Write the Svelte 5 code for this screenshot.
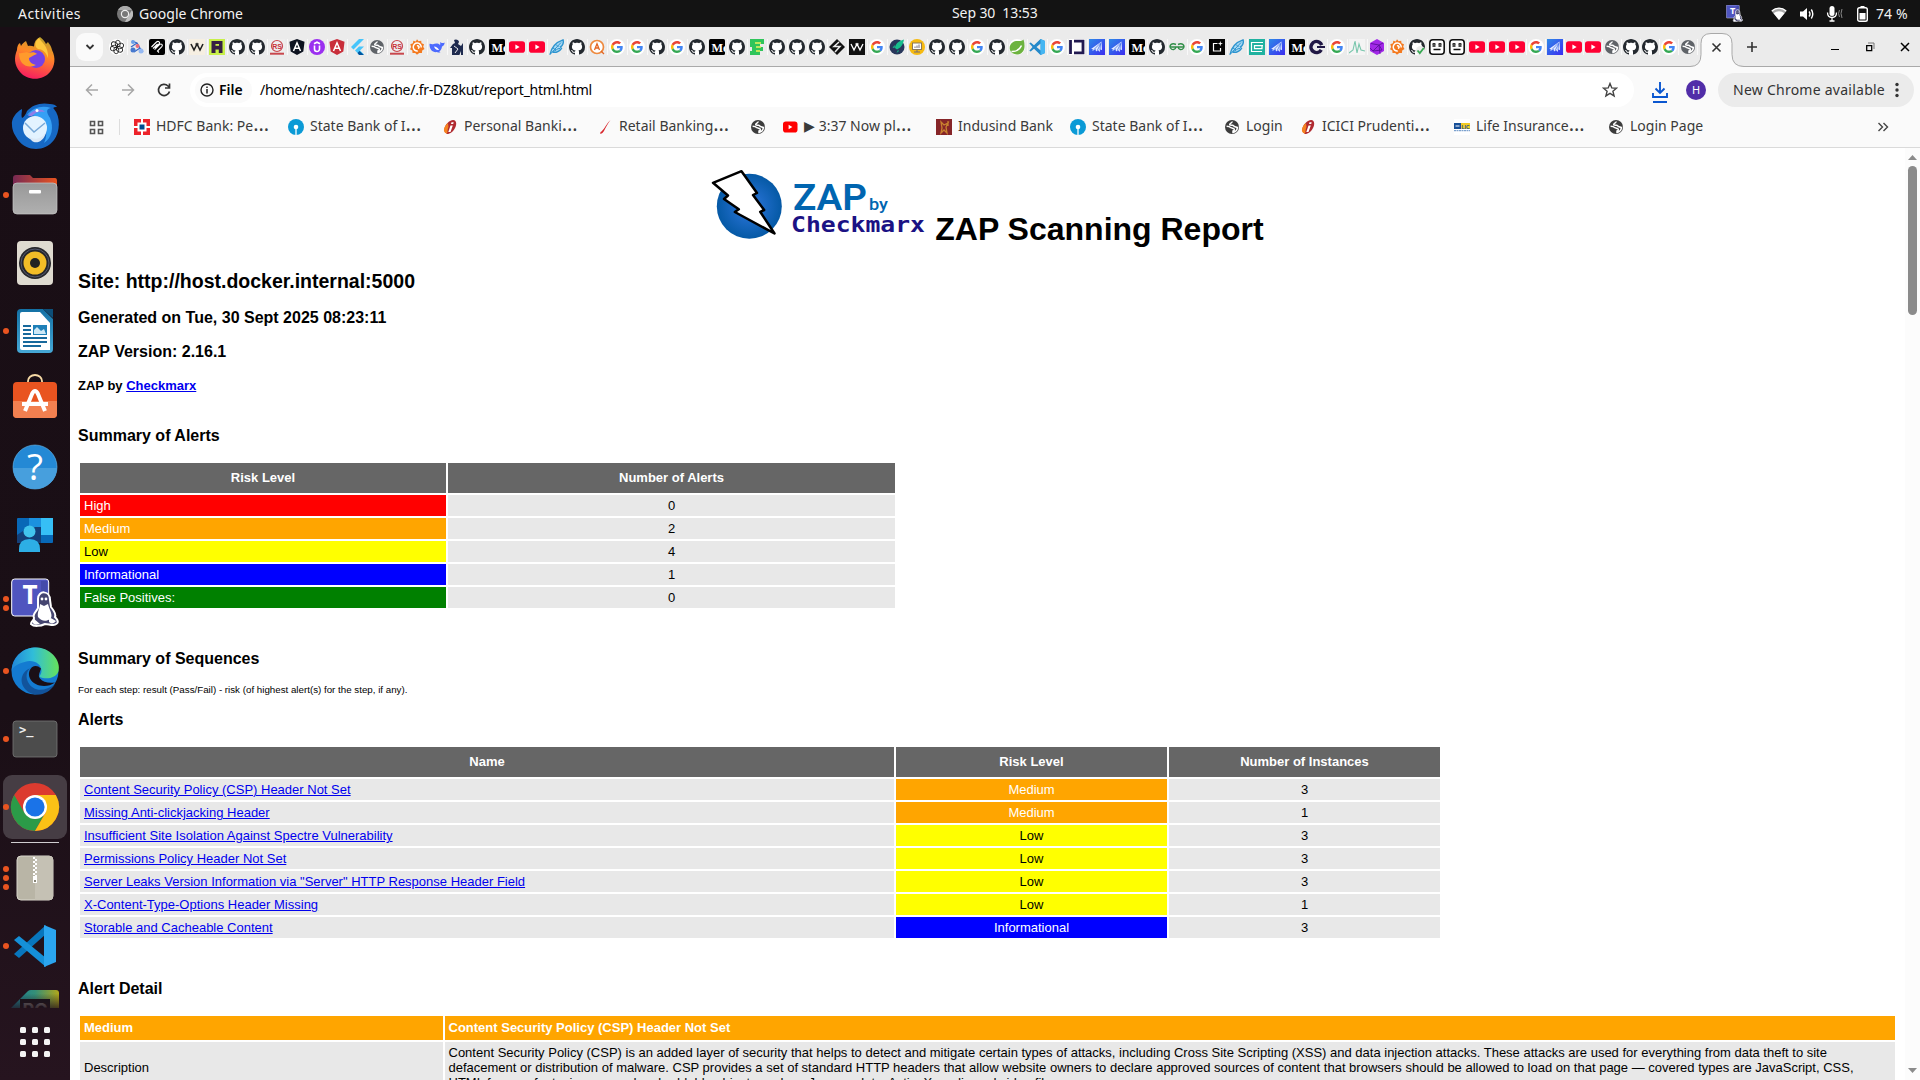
<script>
  const icons = {
    gh: '<circle cx="8" cy="8" r="8" fill="#fff"/><path fill="#24292f" d="M8 0C3.58 0 0 3.58 0 8c0 3.54 2.29 6.53 5.47 7.59.4.07.55-.17.55-.38 0-.19-.01-.82-.01-1.49-2.01.37-2.53-.49-2.69-.94-.09-.23-.48-.94-.82-1.13-.28-.15-.68-.52-.01-.53.63-.01 1.08.58 1.23.82.72 1.21 1.87.87 2.33.66.07-.52.28-.87.51-1.07-1.78-.2-3.64-.89-3.64-3.95 0-.87.31-1.59.82-2.15-.08-.2-.36-1.02.08-2.12 0 0 .67-.21 2.2.82.64-.18 1.32-.27 2-.27.68 0 1.36.09 2 .27 1.53-1.04 2.2-.82 2.2-.82.44 1.1.16 1.92.08 2.12.51.56.82 1.27.82 2.15 0 3.07-1.87 3.75-3.65 3.95.29.25.54.73.54 1.48 0 1.07-.01 1.93-.01 2.2 0 .21.15.46.55.38A8.013 8.013 0 0016 8c0-4.42-3.58-8-8-8z"/>',
    g: '<circle cx="8" cy="8" r="8" fill="#fff"/><g transform="translate(2 2) scale(.25)"><path fill="#EA4335" d="M24 9.5c3.54 0 6.71 1.22 9.21 3.6l6.85-6.85C35.9 2.38 30.47 0 24 0 14.62 0 6.51 5.38 2.56 13.22l7.98 6.19C12.43 13.72 17.74 9.5 24 9.5z"/><path fill="#4285F4" d="M46.98 24.55c0-1.57-.15-3.09-.38-4.55H24v9.02h12.94c-.58 2.96-2.26 5.48-4.78 7.18l7.73 6c4.51-4.18 7.09-10.36 7.09-17.65z"/><path fill="#FBBC05" d="M10.53 28.59c-.48-1.45-.76-2.99-.76-4.59s.27-3.14.76-4.59l-7.98-6.19C.92 16.46 0 20.12 0 24c0 3.88.92 7.54 2.56 10.78l7.97-6.19z"/><path fill="#34A853" d="M24 48c6.48 0 11.93-2.13 15.89-5.81l-7.73-6c-2.15 1.45-4.92 2.3-8.16 2.3-6.26 0-11.57-4.22-13.47-9.91l-7.98 6.19C6.51 42.62 14.62 48 24 48z"/></g>',
    yt: '<rect y="2.3" width="16" height="11.4" rx="2.8" fill="#ff0033"/><path fill="#fff" d="M6.4 5.6v4.8L10.6 8z"/>',
    ytb: '<rect x="1" y="2.5" width="14.5" height="11" rx="2.8" fill="#ff0000"/><path fill="#fff" d="M6.6 5.7v4.6L10.4 8z"/>',
    globe: '<circle cx="8" cy="8" r="7" fill="#5f6368"/><path d="M8.300 2.500c-.2 1.600-2.600 1.500-2.600 2.900 0 1 1.400.8 2.800.8 1.200 0 1.400 1.500 2.500 1.500.9 0 1.100.8 2.500.7-.3 2.500-2 4.500-4.500 5v-1.400c1.200-.3 1.800-1.300.9-2.200-.8-.8-2-.4-3-1.100C5.900 7.800 4.800 7.400 2.600 7.300" fill="none" stroke="#fff" stroke-width="1.5"/>',
    globed: '<circle cx="8" cy="8" r="7" fill="#3c3c3c"/><path d="M8.300 2.500c-.2 1.600-2.600 1.500-2.600 2.900 0 1 1.400.8 2.800.8 1.200 0 1.400 1.500 2.500 1.500.9 0 1.100.8 2.500.7-.3 2.500-2 4.500-4.500 5v-1.400c1.200-.3 1.800-1.300.9-2.200-.8-.8-2-.4-3-1.100C5.900 7.800 4.800 7.400 2.600 7.300" fill="none" stroke="#fff" stroke-width="1.5"/>',
    gpt: '<circle cx="8" cy="8" r="8" fill="#fff"/><g fill="none" stroke="#222" stroke-width=".9"><ellipse cx="8.800" cy="4.600" rx="2.500" ry="3.300"/><ellipse cx="8.800" cy="4.600" rx="2.500" ry="3.300" transform="rotate(60 8 8)"/><ellipse cx="8.800" cy="4.600" rx="2.500" ry="3.300" transform="rotate(120 8 8)"/><ellipse cx="8.800" cy="4.600" rx="2.500" ry="3.300" transform="rotate(180 8 8)"/><ellipse cx="8.800" cy="4.600" rx="2.500" ry="3.300" transform="rotate(240 8 8)"/><ellipse cx="8.800" cy="4.600" rx="2.500" ry="3.300" transform="rotate(300 8 8)"/></g>',
    jenk: '<path d="M3 2l5 2 3 5M2 8l6-4M5 13l6-4 3 4" fill="none" stroke="#3468c8" stroke-width="1.200"/><circle cx="4" cy="3" r="2" fill="#6ca0e8"/><circle cx="8.500" cy="7" r="2" fill="#e96c7a"/><circle cx="4" cy="11" r="2.500" fill="#4779cf"/><circle cx="12" cy="12" r="2.500" fill="#94b8f2"/>',
    mcp: '<rect width="16" height="16" rx="2" fill="#000"/><path d="M2.500 8l5-5c2-1.500 4 .5 2.500 2L6 9M5.500 10.500l5-5c2-1.500 3.700.7 2.300 2.200L8.500 12l1.500 1.500M4 9.500L8.500 5" fill="none" stroke="#fff" stroke-width="1.100"/>',
    wl: '<rect width="16" height="16" fill="#f6efe2"/><path d="M2 5l3 6 3-6 3 6 3-6M6.500 5h3" fill="none" stroke="#222" stroke-width="1.600"/>',
    wd: '<rect width="16" height="16" fill="#111"/><path d="M2 5l3 6 3-6 3 6 3-6M6.500 5h3" fill="none" stroke="#fff" stroke-width="1.300"/>',
    fh: '<rect width="16" height="16" fill="#c8f04a"/><path fill="#352044" d="M2.500 2h11v12H9.800v-3.500H6.500V14h-4z"/><path fill="#c8f04a" d="M6.500 5h3.500v1.800H6.500z"/>',
    rs: '<rect width="16" height="16" fill="#eee"/><circle cx="8" cy="7" r="5.500" fill="none" stroke="#c8474d" stroke-width="1.200"/><text x="8" y="9.700" text-anchor="middle" font-size="7" font-weight="700" fill="#c83038" font-family="Liberation Sans, sans-serif">RS</text><path d="M1 14.700h14" stroke="#c8474d" stroke-width="2"/>',
    angk: '<path fill="#0d1320" d="M8 0l7.500 2.700-1.200 9.800L8 16l-6.300-3.500L.5 2.700z"/><path d="M4.500 12L8 3.800l3.500 8.200M6 9.300h4" fill="none" stroke="#fff" stroke-width="1.500"/>',
    angr: '<path fill="#c92e3a" d="M8 0l7.500 2.700-1.200 9.800L8 16l-6.300-3.500L.5 2.700z"/><path d="M4.500 12L8 3.800l3.500 8.200M6 9.300h4" fill="none" stroke="#fff" stroke-width="1.500"/>',
    ude: '<circle cx="8" cy="8" r="8" fill="#9b2ff0"/><path d="M5.500 6.500V10a2.500 2.500 0 005 0V6.500M5 4.800l3-1.600 3 1.600" fill="none" stroke="#fff" stroke-width="1.600"/>',
    flut: '<path fill="#47c5fb" d="M10 0L2 8l2.500 2.500L15 0zM10 7.500L6 11.500l4 4h5L11 11.500l4-4z"/><path fill="#00569e" d="M8.500 14l2-2 4.500 4h-5z"/>',
    graf: '<path fill="#f47a20" d="M8 .3l1.600 2 2.600-.6.300 2.600 2.500 1-.8 2.500 1.300 2.300-2.300 1.300-.3 2.600-2.700-.1L8 15.800l-1.800-1.900-2.700.2-.2-2.600L1 10.200l1.200-2.300L1.300 5.300l2.600-1L4.300 1.700l2.500.7z"/><path d="M12.200 8.500A4 4 0 108.800 12M8 7c2-.8 3 2 .9 2.300" fill="none" stroke="#fff" stroke-width="1.500"/>',
    whale: '<path fill="#4d6bfe" d="M.5 5c1-.6 2 .8 3.500.2C6 4.300 9 3.700 11 6c.7-1-.3-2.300.6-3 .5 1.400 2.500 1.200 4 .4 0 2-1 3.500-2.600 4-.3 2.500-1.300 4-2.800 5l1.300.8c-2 .8-3.300.2-4-.1C3.500 13.500.3 10.500.5 5z"/><path fill="#fff" d="M5 7.500c2 0 4 1.500 5 3.500-2.500.5-4-1-5-3.500z"/>',
    knight: '<path fill="#1e2a4e" d="M5 1c2-1.500 5 0 5 2l-1 2 3 2 2-3v12h-2v-4l-2 5H6l-3-1V9H1l3-4 2-1z"/><path d="M5 7l4 3-3 4" stroke="#fff" stroke-width=".9" fill="none"/>',
    med: '<rect width="16" height="16" rx="1.500" fill="#000"/><text x="2.500" y="13" font-size="13" font-weight="700" fill="#fff" font-family="Liberation Serif, serif" textLength="17" lengthAdjust="spacingAndGlyphs">Me</text>',
    fea: '<path d="M1 15.500C2 9 7 3 14 .8c1 3-.4 6-2.500 7l1 1.500c-2 3-5 4.500-9 4" fill="#a9d9f3" stroke="#2d94cf" stroke-width="1.400"/><path d="M1 15.500L12 3.500M4 9l3 2M7 5.500L9.500 8M11 9.500c-3-.5-4 2.500-7 3" stroke="#2d94cf" fill="none"/>',
    ao: '<circle cx="8" cy="8" r="6.500" fill="#fff" stroke="#ee8a3f" stroke-width="1.700"/><path d="M5.500 11L8 4.800l2.500 6.200M6.500 9h3M12 12l3 3" fill="none" stroke="#e26524" stroke-width="1.300"/>',
    green: '<path fill="#30c55b" d="M1 0h14v5h-4v3h3v4h-3v4H1v-4h2V8H1z"/><path d="M6 4h6M7 8h5M7 12h4" stroke="#eaf45b" stroke-width="1.500"/>',
    hash: '<path d="M8 0l8 8-8 8-8-8z" fill="#111"/><path d="M10 3L5 7.500h6L6 13" fill="none" stroke="#ebebeb" stroke-width="1.500"/>',
    rocket: '<circle cx="8" cy="8" r="7.500" fill="#28375b"/><path fill="#17be8c" d="M15 .5C9 2 6 5.500 6 9l2 1.500C11.500 9 14 6 15 .5zM6 6L3.500 8.500 5.500 9zM9 11l-1.500 3L10 12z"/>',
    yel: '<circle cx="8" cy="8" r="8" fill="#f6ba11"/><rect x="3.500" y="4" width="9" height="6.500" fill="#fff" stroke="#8b785a"/><path d="M6 9V7.500M8 9V6.500M10 9V5.500M8 11v2M5 13h6" stroke="#756c7b"/>',
    leaf: '<rect width="16" height="16" rx="8" fill="#fff"/><path fill="#6db33f" d="M14.500.500c1.600 5.600 1.700 10.800-2 13.400C8.500 16.700 2.500 15.500 1 11-.4 6.500 3 2.500 7 2c3-.3 6 .5 7.500-1.500z"/><path d="M2.500 12.500c5 .3 8-1.700 10-6" fill="none" stroke="#fff" stroke-width="1.500"/>',
    vs: '<path fill="#2489ca" d="M11.500 0L16 2v12l-4.500 2L5 9.800 1.700 12.500.300 11.700 3.500 8 .300 4.300l1.400-.8L5 6.200zM11.700 4.600L7.500 8l4.200 3.400z"/><path fill="#45b6f2" d="M11.500 0L16 2v12l-4.500 2z"/>',
    id: '<rect width="16" height="16" fill="#fff"/><path d="M1.500 1v14M5 2.200h9v11.600H5" fill="none" stroke="#211950" stroke-width="2.800"/>',
    sq: '<rect width="16" height="16" fill="url(#bluebox)"/><path fill="#e4ecff" d="M12.500 2.500L13 11l-2-.5-.3 2.500-1.700-2L7 12.500 6.500 10l-3 2 .2-2L2 10z"/><path d="M12 3.500L5 10.500M12 4L8.500 11M11.500 5l-.5 6" stroke="#3566e8" stroke-width=".7"/>',
    gfg: '<path d="M7 5.500C3 3.500 0 6 1.500 9c1.500 2.500 5 2 5.500-1H1M9 5.500c4-2 7 .5 5.500 3.500-1.500 2.500-5 2-5.500-1h6M6.500 8h3" fill="none" stroke="#2f8d46" stroke-width="1.400"/>',
    box: '<rect width="16" height="16" fill="#050505"/><path d="M8.500 4.500H4.500v7.500h7V9" fill="none" stroke="#fff" stroke-width="1.200"/><path fill="#fff" d="M11.300 2l.6 2 2 .6-2 .6-.6 2-.6-2-2-.6 2-.6z"/>',
    teal: '<rect width="16" height="16" fill="#20b2a0"/><path d="M14 3.500H2.500v9H13M13 6.500v3.200H5.500V6.700H14" fill="none" stroke="#fff" stroke-width="1.200"/>',
    con: '<circle cx="7.500" cy="8" r="5.500" fill="none" stroke="#201744" stroke-width="3.500" stroke-dasharray="29 6" transform="rotate(30 7.500 8)"/><path d="M8 8h8" stroke="#201744" stroke-width="2"/>',
    pulse: '<rect width="16" height="16" fill="#f4f4f4"/><path d="M0 14l4-3 2-9 2 12 2-9 2 6 4 1" fill="none" stroke="#78c6ac" stroke-width="1.100"/>',
    gem: '<path fill="#a229e8" d="M8 0l7 4v8l-7 4-7-4V4z"/><path d="M2 4.500l8 1.500 4-2M10 6L4 12l9-1zM1 9l3 3M10 6l1 9" stroke="#5b109c" fill="none" stroke-width=".9"/>',
    bot: '<rect x=".8" y=".8" width="14.400" height="14.400" rx="3" fill="#fff" stroke="#111" stroke-width="1.600"/><path d="M3.500 5.500c1-1 2-1 3 0M9.500 5.500c1-1 2-1 3 0M3.500 7h3M9.500 7h3M4.500 10.500h7" fill="none" stroke="#111" stroke-width="1.300"/>',
    hdfc: '<rect width="16" height="16" fill="#ed232a"/><path d="M8 0v16M0 8h16" stroke="#fff" stroke-width="2"/><path fill="#fff" d="M3.500 3.500h9v9h-9z"/><path fill="#004c8f" d="M5.500 5.500h5v5h-5z"/>',
    sbi: '<circle cx="8" cy="8" r="8" fill="#0b9ad6"/><circle cx="8" cy="8" r="2.300" fill="#fff"/><path d="M8 8v8" stroke="#fff" stroke-width="1.300"/>',
    icici: '<path fill="#b02a30" d="M8 2c5-3 7.500 1 5.500 6-1.800 4.500-5.500 7-8.500 7C0 12 3 5 8 2z"/><path fill="#f58220" d="M6 4C2 7 0 13 4.500 14.500 6 15 5 11 6.500 8z"/><path fill="#fff" d="M8.500 6.500h2.300L8.500 13H6.300zM9.500 3.300h2.200l-.5 1.800H9z"/>',
    slash: '<path fill="#d8262c" d="M13.500 1C11 4 9 8 7 12c-1 1.500-2 2.500-3.500 3-.6-1 0-2.300 1-2.500C8 9 10 4 13.500 1z"/>',
    ind: '<rect width="16" height="16" fill="#862528"/><path d="M5 3l3 3 4-2-2 4 1 6-3-3-3 3 1-5zM12 2v5" fill="none" stroke="#c9822f" stroke-width="1.300"/>',
    lic: '<rect width="16" height="16" fill="#fff"/><rect y="4" width="7" height="6" fill="#174f98"/><rect x="7" y="4" width="9" height="6" fill="#f3cb22"/><text x="7.500" y="9.500" font-size="6" font-weight="700" fill="#174f98" font-family="Liberation Sans, sans-serif" textLength="8" lengthAdjust="spacingAndGlyphs">LIC</text><path d="M1.500 7h4" stroke="#fff"/><path d="M0 11.700h16" stroke="#5f8dc3" stroke-dasharray="2 .5"/>'
  };
  icons.ghc = icons.gh + '<circle cx="11.500" cy="11.500" r="4.500" fill="#ebebeb"/><path d="M8.500 11.500l2.300 2.500 4-5" fill="none" stroke="#36a852" stroke-width="1.800"/>';

  const tabs = ('gpt jenk mcp gh wl fh gh gh rs angk ude angr flut globe rs graf whale knight gh med yt yt fea gh ao ' +
    'g g gh g gh med gh green gh gh gh hash wd g rocket yel gh gh g gh leaf vs g id sq sq med gh gfg g box fea ' +
    'teal sq med con g pulse gem graf ghc bot bot yt yt yt g sq yt yt globe gh gh g globe').split(' ');

  const bookmarks = [
    ['hdfc', 'HDFC Bank: Pe', true], ['sbi', 'State Bank of I', true], ['icici', 'Personal Banki', true], ['slash', 'Retail Banking', true],
    ['globed', ''], ['ytb', '▶ 3:37 Now pl', true], ['ind', 'Indusind Bank'], ['sbi', 'State Bank of I', true],
    ['globed', 'Login'], ['icici', 'ICICI Prudenti', true], ['lic', 'Life Insurance', true], ['globed', 'Login Page']
  ];

  const dock = [
    { name: 'firefox', dots: 0, art: '<path fill="url(#fox)" d="M6 15c0-3 1-6 3-7l1 3c1-2 3-4 5-5l2 5c2-.3 4-.2 6 .5C23 7 25 4 29 2c3 2 5 5 6 7l2-2c1 2 3 3 4 8 4 8 3 16-2 22-7 9-23 9-30 0C3 30 3 22 6 15z"/><circle cx="25" cy="24" r="9" fill="#7542e5"/><path fill="#ff9a2c" d="M8 18c3 1 7-2 10 0 3-1 6-1 8 1-4 1-5 3-8 4 0 4 3 6 7 7-8 4-17 0-17-12z"/><path fill="#ffc83d" d="M28 3c2 4 10 8 9 20-2-6-6-9-10-9-5-3-2-9 1-11z"/>' },
    { name: 'thunderbird', dots: 0, art: '<path fill="#1668c4" d="M1 22C0 16 5 9 11 6c0 4-1 5 0 9 2-1 4-4 5-7C21 2 30-1 39 1c3 0 6 1 7 3-4 0-4 1-3 2 7 8 6 23 0 31-9 12-27 12-36 0-4-6-6-10-6-15z"/><path fill="#36a0f5" d="M16 12C22 4 32 2 40 5c-6 1-4 5-1 10 4 9 2 20-6 25 4-8 3-18-4-24-4-3-9-5-13-4z"/><circle cx="24" cy="25" r="12" fill="#e3f3ff"/><path d="M14 20l9 9 11-9" fill="none" stroke="#78a9d8" stroke-width="1.500"/><path fill="#8f7de8" d="M17 13C21 7 30 4 34 9c-5-1-10 0-13 4z"/><path fill="#dce9f6" d="M17 33c6 5 14 3 18-4-2 10-10 12-14 9z"/><circle cx="26" cy="7.500" r="1.500" fill="#fff"/>' },
    { name: 'files', dots: 1, art: '<path fill="url(#folder)" d="M2 7q0-3 3-3h14l3 3h22q2 0 2 3v20H2z"/><rect x="2" y="12" width="44" height="31" rx="4" fill="url(#gray)" stroke="#c7c7c7" stroke-width=".7"/><rect x="18" y="19" width="12" height="3.500" rx="1" fill="#fff"/>' },
    { name: 'music', dots: 0, art: '<rect x="6" y="2" width="36" height="44" rx="4" fill="#dfdbd0"/><circle cx="24" cy="24" r="16" fill="#27272b"/><circle cx="24" cy="24" r="14" fill="none" stroke="#555a70"/><circle cx="24" cy="24" r="11.500" fill="#f3bd27"/><circle cx="24" cy="24" r="5" fill="#222"/>' },
    { name: 'writer', dots: 1, art: '<path fill="url(#write)" d="M10 2h22l10 10v30q0 4-4 4H10q-4 0-4-4V6q0-4 4-4z"/><path fill="#fff" d="M11 5h18l10 11v27H11q-2 0-2-2V7q0-2 2-2z"/><path fill="#0d4f79" d="M32 2h10v9z"/><path d="M12 19h8M12 23h8M12 27h8M12 31h24M12 35h24M12 39h18" stroke="#18699c" stroke-width="1.800"/><rect x="22" y="18" width="14" height="10" fill="#1e80b8"/><path fill="#cde8f6" d="M23 27v-4l3-3 4 4 3-2 2 5z"/>' },
    { name: 'software', dots: 0, art: '<path d="M17 9V6a7 6 0 0114 0v3" fill="none" stroke="#f6d9a5" stroke-width="1.800"/><rect x="2" y="7" width="44" height="36" rx="4" fill="#e95420"/><path fill="#f28050" d="M2 26h44v13q0 4-4 4H6q-4 0-4-4z"/><path d="M14 36l7-17q3-6 6 0l7 17M11 29h26" fill="none" stroke="#fff" stroke-width="4"/>' },
    { name: 'help', dots: 0, art: '<circle cx="24" cy="24" r="22" fill="#2489d5" stroke="#6abcf0" stroke-width=".6"/><path fill="#479fdd" d="M2 25h44a22 21 0 01-44 0z"/><text x="24" y="37" text-anchor="middle" font-size="37" fill="#fff" font-family="Open Sans, sans-serif">?</text>' },
    { name: 'contacts', dots: 0, art: '<rect x="6" y="7" width="36" height="25" rx="1" fill="#0868b7"/><path fill="#1b91df" d="M18 7h12v25H18z"/><path fill="#36bff6" d="M30 7h12v17H30z"/><path fill="#133f78" d="M18 16h12v16H6v-8z"/><circle cx="18.500" cy="20.500" r="6" fill="#42c5ed"/><path fill="#2daee5" d="M8 41v-3q0-10 10.500-10T29 38v3z"/>' },
    { name: 'teams', dots: 2, art: '<rect x=".7" y="0" width="37" height="37" rx="3" fill="#4f55bf" stroke="#fff"/><path fill="#444baa" d="M30 2h6v32h-6z"/><text x="19" y="25" text-anchor="middle" font-size="26" font-weight="700" fill="#fff" font-family="Noto Sans, sans-serif">T</text><path fill="#454570" stroke="#fff" stroke-width="2" d="M27 20c0-9 12-9 12 1l1 7c4 5 5 8 4 10 4 4 4 7-2 8-3 0-5-1-8-1-4 2-11 3-14 0 0-3 3-3 3-6-2-4 3-7 4-10z"/><path fill="#fff" d="M29 25l4 2 4-2c1 5 6 12 2 15-4 3-9 2-12-2-1-5 2-9 2-13zM22 39l7 6c-4 1-6 1-7-1zM38 38l7 4c-2 3-5 3-7 1z"/><circle cx="31" cy="20" r="1.400" fill="#fff"/><circle cx="35" cy="20" r="1.400" fill="#fff"/>' },
    { name: 'edge', dots: 1, art: '<circle cx="24" cy="24" r="23.500" fill="#147bd1"/><path fill="url(#edgeg)" d="M.5 24C2 8 14 0 26 .500c16 1 24 15 21.500 23.500-2 7-12 9-19 6 0-2 2-3 2-6 0-8-9-12-17-9-7 2-11 4-13 9z"/><path fill="#12539b" d="M26 20c-8-2-13 7-9 15 5 10 17 10 27 2-7 12-22 14-30 5-8-10-1-22 12-22z"/><path fill="#1a0f16" d="M30 21.500c-7-7-15 2-11 10 4 8 17 10 25 4-6 1-12 0-15-4-2-3-1-4 1-10z"/>' },
    { name: 'terminal', dots: 1, art: '<rect x="2" y="6" width="44" height="36" rx="3" fill="#4c4c4c" stroke="#777" stroke-width=".8"/><text x="8" y="19" font-size="12" font-weight="700" fill="#eee" font-family="DejaVu Sans Mono, monospace">&gt;_</text>' },
    { name: 'chrome', dots: 1, active: true, art: '<circle cx="24" cy="24" r="24" fill="#dc3b2f"/><path fill="#2b9b48" d="M3.200 12A24 24 0 0024 48l9-16-9 4-11-7z"/><path fill="#fbc116" d="M24 48A24 24 0 0044.800 12H24l10 7 1 10z"/><circle cx="24" cy="24" r="12" fill="#fff"/><circle cx="24" cy="24" r="9.600" fill="#1a73e8"/>' }
  ];
  const dockTail = [
    { name: 'archive', dots: 3, art: '<rect x="6" y="2" width="36" height="44" rx="4" fill="#b9b5a6" stroke="#d9d6cc"/><path fill="#c5c1b4" d="M24 2h14q4 0 4 4v36q0 4-4 4H24z"/><path d="M23 3v20" stroke="#fff" stroke-width="2" stroke-dasharray="2 2"/><path d="M25 5v18" stroke="#fff" stroke-width="2" stroke-dasharray="2 2"/><path fill="#fff" d="M22 22h4v7h-4z"/><path fill="#8a8779" d="M23 26h2v2h-2z"/>' },
    { name: 'vscode', dots: 1, art: '<path fill="#0876bd" d="M3 32l5 4 27-24V3L3 32z"/><path fill="#1590d8" d="M3 18l5-4 27 22v9L3 18z"/><path fill="#2ba5ef" d="M33 3l12 5v32l-12 5z"/>' }
  ];

  const summary = [
    ['High', 0, 'high'], ['Medium', 2, 'medium'], ['Low', 4, 'low'], ['Informational', 1, 'info'], ['False Positives:', 0, 'fp']
  ];
  const alerts = [
    ['Content Security Policy (CSP) Header Not Set', 'Medium', 3, 'medium'],
    ['Missing Anti-clickjacking Header', 'Medium', 1, 'medium'],
    ['Insufficient Site Isolation Against Spectre Vulnerability', 'Low', 3, 'low'],
    ['Permissions Policy Header Not Set', 'Low', 3, 'low'],
    ['Server Leaks Version Information via "Server" HTTP Response Header Field', 'Low', 3, 'low'],
    ['X-Content-Type-Options Header Missing', 'Low', 1, 'low'],
    ['Storable and Cacheable Content', 'Informational', 3, 'info']
  ];
</script>

{#snippet launcher(app)}
  <div class="launcher" class:active={app.active}>
    <span class="dots">{#each Array(app.dots) as _}<i></i>{/each}</span>
    <svg width="48" height="48" viewBox="0 0 48 48">{@html app.art}</svg>
  </div>
{/snippet}

<svg class="defs" width="0" height="0">
  <defs>
    <linearGradient id="bluebox" x2="1" y2="1"><stop stop-color="#2e8be8" /><stop offset="1" stop-color="#3c2cf0" /></linearGradient>
    <linearGradient id="fox" x1=".7" x2=".4" y2="1"><stop stop-color="#b8a32c" /><stop offset=".4" stop-color="#ff8a26" /><stop offset="1" stop-color="#f81d60" /></linearGradient>
    <linearGradient id="folder" x2="1"><stop stop-color="#772953" /><stop offset="1" stop-color="#e95420" /></linearGradient>
    <linearGradient id="gray" x2="0" y2="1"><stop stop-color="#989898" /><stop offset="1" stop-color="#b0b0b0" /></linearGradient>
    <linearGradient id="write" x2="0" y2="1"><stop stop-color="#1370a4" /><stop offset="1" stop-color="#46a8d6" /></linearGradient>
    <linearGradient id="edgeg"><stop stop-color="#2186d8" /><stop offset=".45" stop-color="#30bdd9" /><stop offset="1" stop-color="#66e35a" /></linearGradient>
    <linearGradient id="pc"><stop stop-color="#167b98" /><stop offset=".5" stop-color="#348f78" /><stop offset="1" stop-color="#b1a71a" /></linearGradient>
    <linearGradient id="fade" x2="0" y2="1"><stop offset=".2" stop-color="#24131c" stop-opacity="0" /><stop offset="1" stop-color="#24131c" stop-opacity=".75" /></linearGradient>
    <radialGradient id="orb"><stop stop-color="#2f78e0" /><stop offset="1" stop-color="#0559a5" /></radialGradient>
  </defs>
</svg>

<div class="desktop">
  <header class="topbar">
    <span class="activities">Activities</span>
    <svg class="app-icon" width="16" height="16" viewBox="0 0 16 16"><circle cx="8" cy="8" r="8" fill="#777" /><path d="M1 4a8 8 0 0114 0z" fill="#aaa" /><path d="M8 16A8 8 0 0015 4l-5 8z" fill="#bcbcbc" /><circle cx="8" cy="8" r="4.200" fill="#eee" /><circle cx="8" cy="8" r="3" fill="#777" /></svg>
    <span class="app-name">Google Chrome</span>
    <span class="clock">Sep 30&nbsp; 13:53</span>
    <div class="tray">
      <svg width="17" height="17" viewBox="0 0 48 48">{@html dock[8].art}</svg>
      <svg class="wifi" width="16" height="16" viewBox="0 0 16 16"><path fill="#aaa" d="M8 14L.500 5C5 1 11 1 15.500 5z" /><path fill="#fff" d="M8 14L2.500 7.200C6 4.500 10 4.500 13.500 7.200z" /><path d="M.800 5C5 1.200 11 1.200 15.200 5" fill="none" stroke="#fff" stroke-width="1.300" /></svg>
      <svg class="vol" width="16" height="16" viewBox="0 0 16 16"><path fill="#fff" d="M1 5.500h3L8 2v12l-4-3.500H1z" /><path d="M10 5.500q2 2.500 0 5M12.300 3.500q3 4.500 0 9" fill="none" stroke="#fff" stroke-width="1.400" /></svg>
      <svg class="mic" width="17" height="17" viewBox="0 0 17 17"><rect x="3.500" y="1" width="5" height="10" rx="2.500" fill="#fff" /><path d="M1.500 7.500q0 5 4.500 5t4.500-5M6 12.500V16M3.500 16h5" fill="none" stroke="#fff" stroke-width="1.300" /><path d="M13.500 5q-2 3.500 0 7M16 4q-2 4.500 0 9" fill="none" stroke="#888" /></svg>
      <svg class="bat" width="11" height="16" viewBox="0 0 11 16"><path fill="#fff" d="M3.500 0h4v2h-4zM2.500 7h6v6.500h-6z" /><rect x=".7" y="1.700" width="9.600" height="13.600" rx="1.800" fill="none" stroke="#fff" stroke-width="1.400" /></svg>
      <span class="pct">74 %</span>
    </div>
  </header>

  <div class="main">
    <nav class="dock">
      {#each dock as app (app.name)}{@render launcher(app)}{/each}
      <div class="divider"></div>
      {#each dockTail as app (app.name)}{@render launcher(app)}{/each}
      <svg class="pycharm" width="48" height="18" viewBox="0 0 48 18"><path fill="url(#pc)" d="M0 18L17 1q1-1 3-1h25q3 0 3 3v15z" /><path fill="#17131a" d="M9 9h30v9H9z" /><text x="11.500" y="26" font-size="18" font-weight="700" fill="#777" font-family="Inter, sans-serif">PC</text><path fill="url(#fade)" d="M0 0h48v18H0z" /></svg>
      <div class="grid">{#each Array(9) as _}<i></i>{/each}</div>
    </nav>

    <div class="browser">
      <div class="tabstrip">
        <button class="search" aria-label="Search tabs"><svg width="10" height="10" viewBox="0 0 10 10"><path d="M1.500 3L5 6.500 8.500 3" fill="none" stroke="#333" stroke-width="1.800" /></svg></button>
        <div class="tabs">
          {#each tabs as tab, i}
            <div class="tab" class:narrow={i >= 70}><svg width="16" height="16" viewBox="0 0 16 16">{@html icons[tab]}</svg></div>
          {/each}
        </div>
        <svg class="active-tab" width="54" height="34" viewBox="0 0 54 34"><path fill="#fafafa" stroke="#a9a9a9" d="M0 33.500q11 0 11-12V10.500Q11 .5 21 .5H32Q42 .5 42 10.500v11q0 12 12 12V36H0z" /><path d="M22.500 10.500l8 8m0-8l-8 8" stroke="#333" stroke-width="1.600" /></svg>
        <svg class="plus" width="12" height="12" viewBox="0 0 12 12"><path d="M6 1v10M1 6h10" stroke="#333" stroke-width="1.600" /></svg>
        <div class="win">
          <svg width="12" height="12" viewBox="0 0 12 12"><path d="M2 8.500h8" stroke="#000" /></svg>
          <svg width="12" height="12" viewBox="0 0 12 12"><path d="M4 2h6v6" fill="none" stroke="#777" /><path d="M2.700 4.700h5v5h-5z" fill="none" stroke="#000" stroke-width="1.300" /></svg>
          <svg width="12" height="12" viewBox="0 0 12 12"><path d="M2 2l8 8m0-8l-8 8" stroke="#000" stroke-width="1.500" /></svg>
        </div>
      </div>

      <div class="toolbar">
        <svg width="16" height="16" viewBox="0 0 16 16"><path d="M14 8H3M8 2.500L2.500 8 8 13.500" fill="none" stroke="#a6a6a6" stroke-width="1.500" /></svg>
        <svg width="16" height="16" viewBox="0 0 16 16"><path d="M2 8h11M8 2.500L13.500 8 8 13.500" fill="none" stroke="#a6a6a6" stroke-width="1.500" /></svg>
        <svg width="16" height="16" viewBox="0 0 16 16"><path d="M13.500 9.500A5.600 5.600 0 1112 4l1.500 1.500M13.500 1.500v4.500H9" fill="none" stroke="#333" stroke-width="1.700" /></svg>
        <div class="omnibox">
          <div class="chip">
            <svg width="14" height="14" viewBox="0 0 14 14"><circle cx="7" cy="7" r="6" fill="none" stroke="#222" stroke-width="1.400" /><path d="M7 6v4.500M7 3.500v1.400" stroke="#222" stroke-width="1.500" /></svg>
            <span>File</span>
          </div>
          <span class="url">/home/nashtech/.cache/.fr-DZ8kut/report_html.html</span>
          <svg class="star" width="16" height="16" viewBox="0 0 16 16"><path d="M8 1.500l1.800 4.400 4.700.3-3.600 3 1.200 4.700L8 11.300l-4.100 2.600 1.200-4.700-3.600-3 4.700-.3z" fill="none" stroke="#444" stroke-width="1.400" /></svg>
        </div>
        <svg class="download" width="16" height="22" viewBox="0 0 16 22"><path d="M8 0v10M3.500 6.500L8 11l4.500-4.500M1 11v4h14v-4M1 20h14" fill="none" stroke="#0b57d0" stroke-width="1.900" /></svg>
        <span class="avatar">H</span>
        <div class="update"><span>New Chrome available</span><svg width="4" height="16" viewBox="0 0 4 16"><g fill="#333"><circle cx="2" cy="2.500" r="1.700" /><circle cx="2" cy="8" r="1.700" /><circle cx="2" cy="13.500" r="1.700" /></g></svg></div>
      </div>

      <div class="bookmarks">
        <svg width="15" height="15" viewBox="0 0 15 15"><path d="M1.500 1.500h4v4h-4zM9.500 1.500h4v4h-4zM1.500 9.500h4v4h-4zM9.500 9.500h4v4h-4z" fill="none" stroke="#555" stroke-width="1.600" /></svg>
        <span class="sep"></span>
        {#each bookmarks as [icon, label, cut]}
          <div class="bookmark"><svg width="16" height="16" viewBox="0 0 16 16">{@html icons[icon]}</svg><span class="label">{label}{#if cut}<span class="more">…</span>{/if}</span></div>
        {/each}
        <svg width="12" height="12" viewBox="0 0 12 12"><path d="M1.500 2l4 4-4 4M6.500 2l4 4-4 4" fill="none" stroke="#444" stroke-width="1.400" /></svg>
      </div>

      <div class="viewport">
        <main class="report">
          <h1>
            <svg width="215" height="72" viewBox="0 0 215 72">
              <circle cx="38.300" cy="38.300" r="32.500" fill="url(#orb)" />
              <path fill="#fff" stroke="#000" stroke-width="2.500" stroke-linejoin="round" d="M2 14.800L30.500 3.200 46 25l-4 2L53.200 42l-4 1.800L63.500 65.500 23.800 44l4-2.700L13 31l4-3.500z" />
              <text x="82" y="42" font-size="37" font-weight="600" fill="#0065b0" font-family="Roboto, sans-serif" textLength="74" lengthAdjust="spacingAndGlyphs">ZAP</text>
              <text x="158" y="42" font-size="17" font-weight="500" fill="#0065b0" font-family="Roboto, sans-serif" textLength="19" lengthAdjust="spacingAndGlyphs">by</text>
              <text x="80" y="63.500" font-size="22" font-weight="700" fill="#1b1284" font-family="DejaVu Sans Mono, monospace" textLength="134" lengthAdjust="spacingAndGlyphs">Checkmarx</text>
            </svg>
            ZAP Scanning Report
          </h1>
          <h2>Site: http://host.docker.internal:5000</h2>
          <h3>Generated on Tue, 30 Sept 2025 08:23:11</h3>
          <h3>ZAP Version: 2.16.1</h3>
          <h4>ZAP by <a href="#checkmarx">Checkmarx</a></h4>

          <h3 class="section">Summary of Alerts</h3>
          <table class="summary">
            <colgroup><col class="c366" /><col class="c447" /></colgroup>
            <thead><tr><th>Risk Level</th><th>Number of Alerts</th></tr></thead>
            <tbody>
              {#each summary as [level, count, tone]}
                <tr><td class={tone}>{level}</td><td class="center">{count}</td></tr>
              {/each}
            </tbody>
          </table>

          <h3 class="sequences">Summary of Sequences</h3>
          <p class="hint">For each step: result (Pass/Fail) - risk (of highest alert(s) for the step, if any).</p>
          <h3>Alerts</h3>
          <table class="alerts">
            <colgroup><col class="c814" /><col class="c271" /><col class="c271" /></colgroup>
            <thead><tr><th>Name</th><th>Risk Level</th><th>Number of Instances</th></tr></thead>
            <tbody>
              {#each alerts as [name, level, count, tone]}
                <tr><td><a href="#alert">{name}</a></td><td class="center {tone}">{level}</td><td class="center">{count}</td></tr>
              {/each}
            </tbody>
          </table>

          <h3 class="detail-title">Alert Detail</h3>
          <table class="detail">
            <colgroup><col class="c363" /><col class="c1450" /></colgroup>
            <tbody>
              <tr class="head"><td class="medium">Medium</td><td class="medium">Content Security Policy (CSP) Header Not Set</td></tr>
              <tr><td>Description</td><td>Content Security Policy (CSP) is an added layer of security that helps to detect and mitigate certain types of attacks, including Cross Site Scripting (XSS) and data injection attacks. These attacks are used for everything from data theft to site defacement or distribution of malware. CSP provides a set of standard HTTP headers that allow website owners to declare approved sources of content that browsers should be allowed to load on that page — covered types are JavaScript, CSS, HTML frames, fonts, images and embeddable objects such as Java applets, ActiveX, audio and video files.</td></tr>
            </tbody>
          </table>
        </main>
        <div class="scrollbar">
          <svg width="9" height="5" viewBox="0 0 9 5"><path fill="#8b8b8b" d="M4.500 0L9 5H0z" /></svg>
          <div class="thumb"></div>
          <svg class="down" width="9" height="5" viewBox="0 0 9 5"><path fill="#8b8b8b" d="M0 0h9L4.500 5z" /></svg>
        </div>
      </div>
    </div>
  </div>
</div>

<style>
  :global(body) { margin: 0; overflow: hidden; }
  * { box-sizing: border-box; }
  svg { display: block; flex: none; }
  .defs { position: absolute; }
  .desktop { width: 1920px; height: 1080px; overflow: hidden; display: flex; flex-direction: column; font-family: "Noto Sans", sans-serif; }
  .topbar { height: 27px; flex: none; background: #131313; color: #f2f2f2; font-size: 14px; line-height: 27px; display: grid; grid-template-columns: 18px 99px 22px 813px 774px 194px; align-items: center; white-space: nowrap; }
  .activities { grid-column: 2; letter-spacing: .47px; }
  .app-name { letter-spacing: .05px; }
  .clock { height: 27px; line-height: 26px; letter-spacing: -.1px; }
  .tray { display: flex; align-items: center; }
  .wifi { margin-left: 28px; }
  .vol { margin-left: 12px; }
  .mic { margin-left: 11px; }
  .bat { margin-left: 14px; }
  .pct { margin-left: 8px; letter-spacing: .1px; }
  .main { flex: 1; min-height: 0; display: flex; }
  .dock { width: 70px; flex: none; background: linear-gradient(#190e15, #1a0f16 65%, #26141f); display: flex; flex-direction: column; align-items: center; overflow: hidden; }
  .launcher { width: 70px; height: 64px; margin-bottom: 4px; flex: none; display: flex; align-items: center; }
  .launcher svg { overflow: visible; }
  .launcher.active { width: 64px; background: #463d44; border-radius: 9px; }
  .dots { width: 11px; padding-left: 3px; display: flex; flex-direction: column; gap: 3px; }
  .active .dots { width: 8px; padding-left: 0; }
  .dots i { width: 6px; height: 6px; border-radius: 50%; background: #e95420; }
  .divider { width: 48px; height: 1px; background: #d0cdd0; margin: -1px 0 3px; flex: none; }
  .pycharm { margin-top: 8px; }
  .grid { margin-top: 19px; display: grid; grid-template-columns: repeat(3, 6px); gap: 6px; }
  .grid i { height: 6px; border-radius: 1.500px; background: #f4f4f4; }

  .browser { flex: 1; min-width: 0; display: flex; flex-direction: column; background: #fafafa; }
  .tabstrip { height: 40px; flex: none; background: #ebebeb; border-bottom: 1px solid #a9a9a9; display: flex; align-items: flex-start; padding-top: 6px; }
  .search { width: 27px; height: 28px; margin-left: 6px; padding: 0; border: 0; border-radius: 9px; background: #fafafa; display: grid; place-items: center; }
  .tabs { display: flex; margin: 6px 0 0 5px; }
  .tab { width: 20px; height: 16px; padding-left: 1px; border-right: 1px solid #f9f9f9; flex: none; }
  .tab.narrow { width: 19px; }
  .active-tab { margin-left: -8px; }
  .plus { margin: 8px 0 0 2px; }
  .win { margin: 8px 9px 0 auto; display: flex; gap: 23px; }
  .toolbar { height: 46px; flex: none; display: flex; align-items: center; padding: 0 6px 0 14px; font-size: 14px; }
  .toolbar > svg + svg { margin-left: 20px; }
  .omnibox { width: 1444px; height: 34px; margin-left: 18px; padding: 0 16px 0 5px; border-radius: 17px; background: #fff; display: flex; align-items: center; }
  .chip { width: 57px; height: 26px; padding-left: 5px; border-radius: 13px; background: #fafafa; display: flex; align-items: center; gap: 5px; font-weight: 600; }
  .chip span { padding-bottom: 2px; }
  .url { margin-left: 8px; padding-bottom: 2px; white-space: nowrap; letter-spacing: -.25px; }
  .star { margin-left: auto; }
  .toolbar .download { margin: 5px 0 0 18px; }
  .avatar { width: 20px; height: 20px; margin-left: 18px; border-radius: 50%; background: #512da8; color: #fff; font-size: 11px; line-height: 20px; text-align: center; }
  .update { width: 196px; height: 34px; margin-left: 12px; padding: 0 15px; border-radius: 17px; background: #ebebeb; color: #333; display: flex; align-items: center; justify-content: space-between; white-space: nowrap; letter-spacing: .25px; }
  .update span { padding-bottom: 2px; }
  .bookmarks { height: 35px; flex: none; border-bottom: 1px solid #dadada; padding: 0 0 6px 19px; display: grid; grid-template-columns: 30px 15px 154px 154px 155px 153px 32px 154px 134px 154px 76px 154px 154px 269px 12px; align-items: center; font-size: 14px; color: #3a3a3a; }
  .sep { width: 1px; height: 16px; background: #ddd; }
  .bookmark { display: flex; align-items: center; gap: 6px; white-space: nowrap; }
  .label { line-height: 16px; padding-bottom: 2px; }
  .more { font-size: 20px; line-height: 0; }

  .viewport { flex: 1; min-height: 0; display: flex; background: #fff; overflow: hidden; }
  .report { width: 1835px; padding: 20px 8px 0; font-family: "Liberation Sans", Arial, sans-serif; font-size: 13px; line-height: 15px; color: #000; overflow: hidden; }
  h1, h2, h3, h4, p { margin: 0; }
  h1 { height: 101px; font-size: 32px; line-height: 37px; text-align: center; }
  h1 svg { display: inline-block; vertical-align: baseline; }
  h2 { font-size: 19.500px; line-height: 24px; }
  h3 { font-size: 16px; line-height: 18px; margin-top: 16px; }
  h4 { margin-top: 17px; font-size: 13px; line-height: 15px; }
  a { color: #0000ee; text-decoration: underline; }
  .section { margin-top: 34px; }
  .sequences { margin-top: 40px; }
  .hint { margin-top: 16px; font-size: 9.750px; line-height: 11px; }
  .detail-title { margin-top: 40px; }
  table { margin-top: 16px; border-collapse: separate; border-spacing: 2px; table-layout: fixed; }
  .summary { width: 819px; }
  .alerts { width: 1364px; }
  .detail { width: 1819px; }
  .c366 { width: 366px; } .c447 { width: 447px; } .c814 { width: 814px; } .c271 { width: 271px; } .c363 { width: 363px; } .c1450 { width: 1450px; }
  th { height: 30px; padding: 0 0 2px; background: #666; color: #fff; font-size: 13px; text-align: center; }
  td { height: 21px; padding: 3px 4px; background: #e8e8e8; }
  .head td { height: 24px; padding: 3px 4px 5px; font-weight: 700; }
  .detail td + td { padding-left: 3.500px; }
  .center { text-align: center; }
  td.high { background: red; color: #fff; }
  td.medium { background: orange; color: #fff; }
  td.low { background: yellow; color: #000; }
  td.info { background: blue; color: #fff; }
  td.fp { background: green; color: #fff; }
  .scrollbar { width: 15px; background: #fcfcfc; display: flex; flex-direction: column; align-items: center; padding: 7px 0; }
  .thumb { width: 9px; height: 149px; margin-top: 6px; border-radius: 5px; background: #8b8b8b; }
  .down { margin-top: auto; }
</style>
